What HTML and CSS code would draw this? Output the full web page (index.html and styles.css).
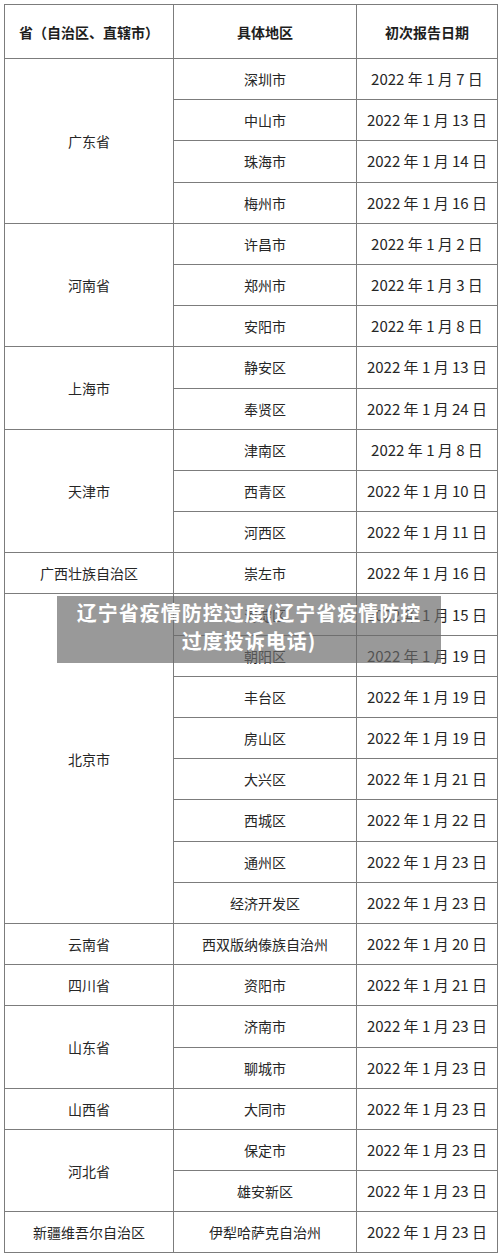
FILE: index.html
```html
<!DOCTYPE html>
<html lang="zh">
<head>
<meta charset="utf-8">
<link rel="stylesheet" href="styles.css">
</head>
<body>
<div class="wrap">
<table class="tbl">
<colgroup><col class="c1"><col class="c2"><col class="c3"></colgroup>
<thead>
<tr class="head"><th>省（自治区、直辖市）</th><th>具体地区</th><th>初次报告日期</th></tr>
</thead>
<tbody>
<tr><td rowspan="4">广东省</td><td>深圳市</td><td>2022 年 1 月 7 日</td></tr>
<tr><td>中山市</td><td>2022 年 1 月 13 日</td></tr>
<tr><td>珠海市</td><td>2022 年 1 月 14 日</td></tr>
<tr><td>梅州市</td><td>2022 年 1 月 16 日</td></tr>
<tr><td rowspan="3">河南省</td><td>许昌市</td><td>2022 年 1 月 2 日</td></tr>
<tr><td>郑州市</td><td>2022 年 1 月 3 日</td></tr>
<tr><td>安阳市</td><td>2022 年 1 月 8 日</td></tr>
<tr><td rowspan="2">上海市</td><td>静安区</td><td>2022 年 1 月 13 日</td></tr>
<tr><td>奉贤区</td><td>2022 年 1 月 24 日</td></tr>
<tr><td rowspan="3">天津市</td><td>津南区</td><td>2022 年 1 月 8 日</td></tr>
<tr><td>西青区</td><td>2022 年 1 月 10 日</td></tr>
<tr><td>河西区</td><td>2022 年 1 月 11 日</td></tr>
<tr><td>广西壮族自治区</td><td>崇左市</td><td>2022 年 1 月 16 日</td></tr>
<tr><td rowspan="8">北京市</td><td>海淀区</td><td>2022 年 1 月 15 日</td></tr>
<tr><td>朝阳区</td><td>2022 年 1 月 19 日</td></tr>
<tr><td>丰台区</td><td>2022 年 1 月 19 日</td></tr>
<tr><td>房山区</td><td>2022 年 1 月 19 日</td></tr>
<tr><td>大兴区</td><td>2022 年 1 月 21 日</td></tr>
<tr><td>西城区</td><td>2022 年 1 月 22 日</td></tr>
<tr><td>通州区</td><td>2022 年 1 月 23 日</td></tr>
<tr><td>经济开发区</td><td>2022 年 1 月 23 日</td></tr>
<tr><td>云南省</td><td>西双版纳傣族自治州</td><td>2022 年 1 月 20 日</td></tr>
<tr><td>四川省</td><td>资阳市</td><td>2022 年 1 月 21 日</td></tr>
<tr><td rowspan="2">山东省</td><td>济南市</td><td>2022 年 1 月 23 日</td></tr>
<tr><td>聊城市</td><td>2022 年 1 月 23 日</td></tr>
<tr><td>山西省</td><td>大同市</td><td>2022 年 1 月 23 日</td></tr>
<tr><td rowspan="2">河北省</td><td>保定市</td><td>2022 年 1 月 23 日</td></tr>
<tr><td>雄安新区</td><td>2022 年 1 月 23 日</td></tr>
<tr><td>新疆维吾尔自治区</td><td>伊犁哈萨克自治州</td><td>2022 年 1 月 23 日</td></tr>
</tbody>
</table>
<div class="banner">辽宁省疫情防控过度(辽宁省疫情防控<br>过度投诉电话)</div>
</div>
</body>
</html>
```

FILE: styles.css
```css
html, body {
  margin: 0;
  padding: 0;
  background: #ffffff;
}
body {
  font-family: "Noto Sans CJK SC", "Noto Sans", sans-serif;
  color: #262626;
}
.wrap {
  position: relative;
  padding: 4px 0 0 4px;
  width: 493px;
}
.tbl {
  width: 493px;
  border-collapse: collapse;
  table-layout: fixed;
  font-size: 14px;
}
.c1 { width: 169px; }
.c2 { width: 183px; }
.c3 { width: 141px; }
.tbl th, .tbl td {
  border: 1px solid #7c7c7c;
  text-align: center;
  vertical-align: middle;
  padding: 0;
  height: 40.2px;
  line-height: 20px;
}
.tbl td:last-child {
  font-size: 15px;
}
.head th {
  height: 53px;
  font-weight: bold;
  font-size: 14px;
  color: #1e1e1e;
}
.banner {
  position: absolute;
  left: 57px;
  top: 596px;
  width: 384px;
  height: 67px;
  box-sizing: border-box;
  padding-top: 3px;
  background: rgba(105, 105, 105, 0.68);
  color: #ffffff;
  font-weight: bold;
  font-size: 20px;
  line-height: 28px;
  text-align: center;
  letter-spacing: 1px;
}
```
